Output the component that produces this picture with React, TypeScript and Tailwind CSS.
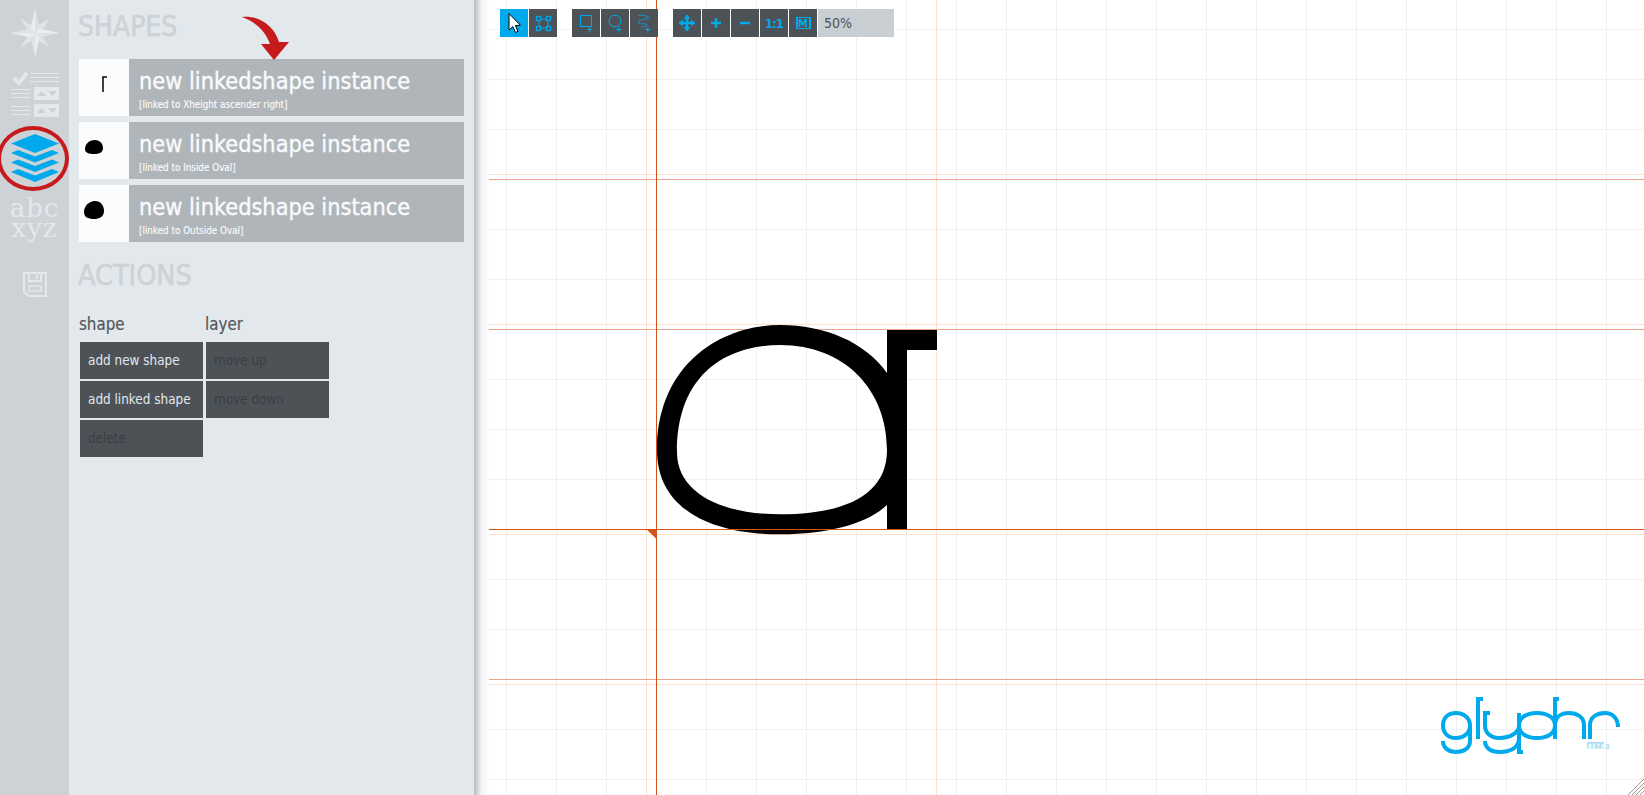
import React from "react";

const FONT = { fontFamily: '"DejaVu Sans Condensed", "DejaVu Sans", sans-serif' };

function Compass() {
  const light = "M25 0 L25 25 L20.5 20.5 Z M50 25 L25 25 L29.5 20.5 Z M25 50 L25 25 L29.5 29.5 Z M0 25 L25 25 L20.5 29.5 Z";
  const dim = "M25 0 L29.5 20.5 L25 25 Z M50 25 L29.5 29.5 L25 25 Z M25 50 L20.5 29.5 L25 25 Z M0 25 L20.5 20.5 L25 25 Z";
  const diag = "M10 10 L24 19 L19 24 Z M40 10 L31 24 L26 19 Z M40 40 L26 31 L31 26 Z M10 40 L19 26 L24 31 Z";
  return (
    <svg width="50" height="50" viewBox="0 0 50 50" className="block">
      <path d={diag} fill="#dfe3e7" />
      <path d={dim} fill="#dde2e6" />
      <path d={light} fill="#eaedf0" />
    </svg>
  );
}

function Checklist() {
  return (
    <svg width="48" height="45" viewBox="9 72 48 45" className="block">
      <path d="M12 78 L17 83 L25 73" fill="none" stroke="#e3e8ec" strokeWidth="4" />
      <g stroke="#e3e8ec" strokeWidth="1">
        <path d="M28 73.5 H57 M28 77.5 H57 M28 81.5 H57" />
        <path d="M9 89.5 H28 M9 93.5 H28 M9 97.5 H28" />
        <path d="M9 106.5 H28 M9 110.5 H28 M9 114.5 H28" />
      </g>
      <rect x="32" y="87" width="25" height="13" fill="#e3e8ec" />
      <rect x="32" y="104" width="25" height="13" fill="#e3e8ec" />
      <path d="M35 96 L39.5 91 L44 96 Z M46 91 H55 L50.5 96 Z M35 113 L39.5 108 L44 113 Z M46 108 H55 L50.5 113 Z" fill="#cdd2d6" />
    </svg>
  );
}

function Layers() {
  return (
    <svg width="48" height="48" viewBox="9 134 48 48" className="block">
      <g fill="#00a9eb">
        <path d="M9 143.5 L33 134 L57 143.5 L33 153 Z" />
        <path d="M9 153 L16 150 L33 156.5 L50 150 L57 153 L33 162.5 Z" />
        <path d="M9 162.5 L16 159.5 L33 166 L50 159.5 L57 162.5 L33 172 Z" />
        <path d="M9 172 L16 169 L33 175.5 L50 169 L57 172 L33 182 Z" />
      </g>
    </svg>
  );
}

function Save() {
  return (
    <svg width="24" height="25" viewBox="0 0 24 25" className="block" fill="none" stroke="#e3e8ec" strokeWidth="2">
      <path d="M1 1 H23 V24 H6 L1 20 Z" />
      <path d="M6 1 V9 H18 V1 M14 3 V7" />
      <path d="M6 14 H18 V19 H6 Z" strokeWidth="1.5" />
    </svg>
  );
}

function Rail() {
  return (
    <div className="relative w-[69px] shrink-0 flex flex-col items-center bg-[#cdd2d6]">
      <div className="mt-[8px]">
        <Compass />
      </div>
      <div className="mt-[14px]">
        <Checklist />
      </div>
      <div className="mt-[17px]">
        <Layers />
      </div>
      <div
        className="mt-[16px] text-[26px] leading-[20px] tracking-[1px] text-[#e3e8ec] text-center"
        style={{ fontFamily: '"DejaVu Serif", serif' }}
      >
        <div>abc</div>
        <div>xyz</div>
      </div>
      <div className="mt-[34px]">
        <Save />
      </div>
      <div className="absolute left-[-3px] top-[126px] w-[72px] h-[65px] rounded-[50%] border-[4px] border-[#c71a1c]" />
    </div>
  );
}

function Row({ sub, thumb }: { sub: string; thumb: React.ReactNode }) {
  return (
    <div className="flex h-[57px]">
      <div className="w-[50px] bg-[#fbfcfe] shrink-0">{thumb}</div>
      <div className="flex-1 bg-[#b0b5b9] pl-[10px] text-[#f8fafd] flex flex-col">
        <div className="text-[23.3px] leading-[30px] mt-[7px] whitespace-nowrap [-webkit-text-stroke:0.4px_currentColor]">
          new linkedshape instance
        </div>
        <div className="text-[9.8px] leading-[12px] mt-[3px] whitespace-nowrap [-webkit-text-stroke:0.15px_currentColor]">{sub}</div>
      </div>
    </div>
  );
}

function ActionBtn({ label, disabled }: { label: string; disabled?: boolean }) {
  return (
    <div
      className={
        "w-[123px] h-[37px] bg-[#4d5257] pl-[8px] text-[13.4px] leading-[37px] whitespace-nowrap " +
        (disabled ? "text-[#3b3f45]" : "text-[#e3e8ec]")
      }
    >
      {label}
    </div>
  );
}

function Panel() {
  return (
    <div className="relative w-[405px] shrink-0 bg-[#e3e8ec] pl-[10px] pr-[10px]">
      <div className="text-[28px] leading-[36px] mt-[9px] ml-[-1px] text-[#cdd2d6] [-webkit-text-stroke:0.6px_currentColor]">SHAPES</div>
      <div className="mt-[14px] flex flex-col gap-[6px] pr-0">
        <Row
          sub="[linked to Xheight ascender right]"
          thumb={
            <svg width="50" height="57" viewBox="0 0 50 57" className="block">
              <path d="M28 18 H24 V33" fill="none" stroke="#000" strokeWidth="1.5" />
            </svg>
          }
        />
        <Row
          sub="[linked to Inside Oval]"
          thumb={
            <svg width="50" height="57" viewBox="0 0 50 57" className="block">
              <path d="M16 18 C21 18 24 22 24 26 C24 30.5 20 32 15 32 C10 32 6 31 6 27 C6 22 10 18 16 18 Z" fill="#000" />
            </svg>
          }
        />
        <Row
          sub="[linked to Outside Oval]"
          thumb={
            <svg width="50" height="57" viewBox="0 0 50 57" className="block">
              <path d="M16 16 C22 16 25 21 25 26 C25 32 20 34 15 34 C9 34 5 32 5 27 C5 21 10 16 16 16 Z" fill="#000" />
            </svg>
          }
        />
      </div>
      <div className="text-[28.5px] leading-[36px] mt-[16px] ml-[-1px] text-[#cdd2d6] [-webkit-text-stroke:0.6px_currentColor]">ACTIONS</div>
      <div className="mt-[18px] flex gap-[3px] pl-[1px]">
        <div className="flex flex-col">
          <div className="text-[16.8px] leading-[24px] mb-[6px] ml-[-1px] text-[#53585d] [-webkit-text-stroke:0.2px_currentColor]">shape</div>
          <div className="flex flex-col gap-[2px]">
            <ActionBtn label="add new shape" />
            <ActionBtn label="add linked shape" />
            <ActionBtn label="delete" disabled />
          </div>
        </div>
        <div className="flex flex-col">
          <div className="text-[16.8px] leading-[24px] mb-[6px] ml-[-1px] text-[#53585d] [-webkit-text-stroke:0.2px_currentColor]">layer</div>
          <div className="flex flex-col gap-[2px]">
            <ActionBtn label="move up" disabled />
            <ActionBtn label="move down" disabled />
          </div>
        </div>
      </div>
      <svg width="50" height="46" viewBox="240 16 50 46" className="absolute left-[171px] top-[16px]">
        <path d="M242 17 C258 15 274 25 279 42 L289 42 L274 60 L261 44 L270 44 C266 32 256 22 242 17 Z" fill="#c71a1c" />
      </svg>
    </div>
  );
}

function TB({ active, children }: { active?: boolean; children: React.ReactNode }) {
  return (
    <div className={"w-[28px] h-[28px] flex items-center justify-center " + (active ? "bg-[#00a9eb]" : "bg-[#4d5257]")}>
      {children}
    </div>
  );
}

function I({ children }: { children: React.ReactNode }) {
  return (
    <svg width="28" height="28" viewBox="0 0 28 28" className="block" fill="none" stroke="#00a9eb" strokeWidth="1">
      {children}
    </svg>
  );
}

const Plus = () => <path d="M15 20.5 H20.5 M17.8 18 V23.5" />;

function Toolbar() {
  return (
    <div className="absolute left-[11px] top-[9px] flex gap-[15px]" style={FONT}>
      <div className="flex gap-[1px]">
        <TB active>
          <svg width="28" height="28" viewBox="0 0 28 28" className="block">
            <path d="M9 4.5 V21 L12.8 17.6 L15.5 23.5 L18 22.4 L15.4 16.6 L20.4 16.2 Z" fill="#fff" stroke="#000" strokeWidth="1" />
          </svg>
        </TB>
        <TB>
          <I>
            <rect x="10" y="10" width="9" height="9" />
            <g fill="#4d5257" strokeWidth="1.3">
              <rect x="7.5" y="7.5" width="4" height="4" />
              <rect x="17.5" y="7.5" width="4" height="4" />
              <rect x="7.5" y="17.5" width="4" height="4" />
              <rect x="17.5" y="17.5" width="4" height="4" />
            </g>
          </I>
        </TB>
      </div>
      <div className="flex gap-[1px]">
        <TB>
          <I>
            <rect x="8.5" y="6.5" width="11" height="11" />
            <Plus />
          </I>
        </TB>
        <TB>
          <I>
            <ellipse cx="14" cy="12" rx="6" ry="5.8" />
            <Plus />
          </I>
        </TB>
        <TB>
          <I>
            <path d="M9 6.5 C12 6 18 7 19 8.5 C17 10.5 9 10 8.5 13 C8.5 16 15 14 17 15.5 C17.5 17 15 18 11.5 18" strokeDasharray="2 0.8" />
            <Plus />
          </I>
        </TB>
      </div>
      <div className="flex gap-[1px]">
        <TB>
          <I>
            <path d="M14 6 V22 M6 14 H22" strokeWidth="2.5" />
            <path d="M14 6 L10.5 10 H17.5 Z M14 22 L10.5 18 H17.5 Z M6 14 L10 10.5 V17.5 Z M22 14 L18 10.5 V17.5 Z" fill="#00a9eb" stroke="none" />
          </I>
        </TB>
        <TB>
          <I>
            <path d="M9 14 H19 M14 9 V19" strokeWidth="2.5" />
          </I>
        </TB>
        <TB>
          <I>
            <path d="M9 14 H19" strokeWidth="2.5" />
          </I>
        </TB>
        <TB>
          <span className="text-[13px] font-bold tracking-[-1px] text-[#00a9eb] leading-none">1:1</span>
        </TB>
        <TB>
          <span className="w-[15px] h-[12px] border-x-[2px] border-y-[1.5px] border-[#00a9eb] flex items-center justify-center text-[11px] font-bold text-[#00a9eb] leading-none">
            M
          </span>
        </TB>
        <div className="w-[76px] h-[28px] bg-[#c9ced2] pl-[6px] text-[14px] leading-[28px] text-[#4d5257]">50%</div>
      </div>
    </div>
  );
}

function Logo() {
  return (
    <svg width="184" height="62" viewBox="1440 695 184 62" className="absolute right-[20px] bottom-[38px]">
      <g fill="none" stroke="#00a9eb" strokeWidth="4">
        <path d="M1470 725.5 C1470 718 1464 713 1456 713 C1448 713 1443 718 1443 725.5 C1443 733 1448 738 1456 738 C1464 738 1470 733 1470 725.5 V741 C1470 748 1464 752 1456 752 C1449 752 1443 748 1443 741" />
        <path d="M1483 699 H1478 V739" />
        <path d="M1490 713 H1485 V725.5 C1485 733 1491 738 1499 738 C1510 738 1519 733 1519 725.5 V713 M1519 726 V752 H1523" />
        <path d="M1485 741 C1485 748 1491 752 1499 752 C1510 752 1519 748 1519 738" />
        <path d="M1519 725.5 C1519 718 1526 713 1537 713 C1548 713 1555 718 1555 725.5 C1555 733 1548 738 1537 738 C1526 738 1519 733 1519 725.5 Z" />
        <path d="M1559 699 H1555 V739" />
        <path d="M1555 725 C1555 717 1561 713 1569 713 C1577 713 1584 717 1584 725 V739" />
        <path d="M1590 739 V725 C1590 717 1597 713 1605 713 C1612 713 1618 718 1618 727" />
      </g>
      <rect x="1587" y="742" width="17" height="6.5" fill="#a9dcf3" />
      <text x="1588" y="747.8" fontSize="6" fontWeight="700" fill="#fff" letterSpacing="0.6" fontFamily="'DejaVu Sans Mono', monospace">BETA</text>
      <text x="1605" y="748.5" fontSize="8" fontWeight="700" fill="#a9dcf3" fontFamily="'Liberation Sans', sans-serif">3</text>
    </svg>
  );
}

function Guides() {
  const vGrid: number[] = [];
  for (let x = 506; x < 1644; x += 50) vGrid.push(x);
  const hGrid: number[] = [];
  for (let y = 29; y < 795; y += 50) hGrid.push(y);
  return (
    <svg width="1155" height="795" viewBox="489 0 1155 795" className="absolute left-0 top-0 block">
      <g stroke="#f0f0f0" strokeWidth="1">
        {vGrid.map((x) => (
          <line key={x} x1={x + 0.5} x2={x + 0.5} y1="0" y2="795" />
        ))}
        {hGrid.map((y) => (
          <line key={y} y1={y + 0.5} y2={y + 0.5} x1="489" x2="1644" />
        ))}
      </g>
      <g stroke="#fadfd3" strokeWidth="1">
        <line x1="646.5" x2="646.5" y1="0" y2="795" />
        <line x1="936.5" x2="936.5" y1="0" y2="795" />
        {[174, 324, 534, 684].map((y) => (
          <line key={y} y1={y + 0.5} y2={y + 0.5} x1="489" x2="1644" />
        ))}
      </g>
      <g stroke="#eba38a" strokeWidth="1">
        {[179, 329, 679].map((y) => (
          <line key={y} y1={y + 0.5} y2={y + 0.5} x1="489" x2="1644" />
        ))}
      </g>
      <path
        fillRule="evenodd"
        fill="#000"
        d="M780 325 C720 325 657 365 657 450 C657 510 712 534.3 780 534.3 C830 534.3 868 523 887 505 L887 529 H907 V350 H937 V330 H887 L887 373 C865 342 825 325 780 325 Z M780 345 C725 345 677 375 677 452 C677 495 725 514.3 780 514.3 C845 514.3 887 495 887 450 C887 390 845 345 780 345 Z"
      />
      <g stroke="#d2541b" strokeWidth="1">
        <line x1="656.5" x2="656.5" y1="0" y2="795" />
        <line y1="529.5" y2="529.5" x1="489" x2="1644" />
      </g>
      <path d="M646.7 529.5 H656.5 V539 Z" fill="#d2541b" />
      <g stroke="#9a9a9a" strokeWidth="1">
        <line x1="1644" y1="779" x2="1628" y2="795" />
        <line x1="1644" y1="783" x2="1632" y2="795" />
        <line x1="1644" y1="787" x2="1636" y2="795" />
        <line x1="1644" y1="791" x2="1640" y2="795" />
      </g>
    </svg>
  );
}

function Canvas() {
  return (
    <div className="relative flex-1 bg-white">
      <Guides />
      <Toolbar />
      <Logo />
    </div>
  );
}

export default function App() {
  return (
    <div className="flex w-[1644px] h-[795px] overflow-hidden bg-white" style={FONT}>
      <Rail />
      <Panel />
      <div className="w-[15px] shrink-0 bg-gradient-to-r from-[#b8bcc0] via-[#f2f3f4] to-white" />
      <Canvas />
    </div>
  );
}
